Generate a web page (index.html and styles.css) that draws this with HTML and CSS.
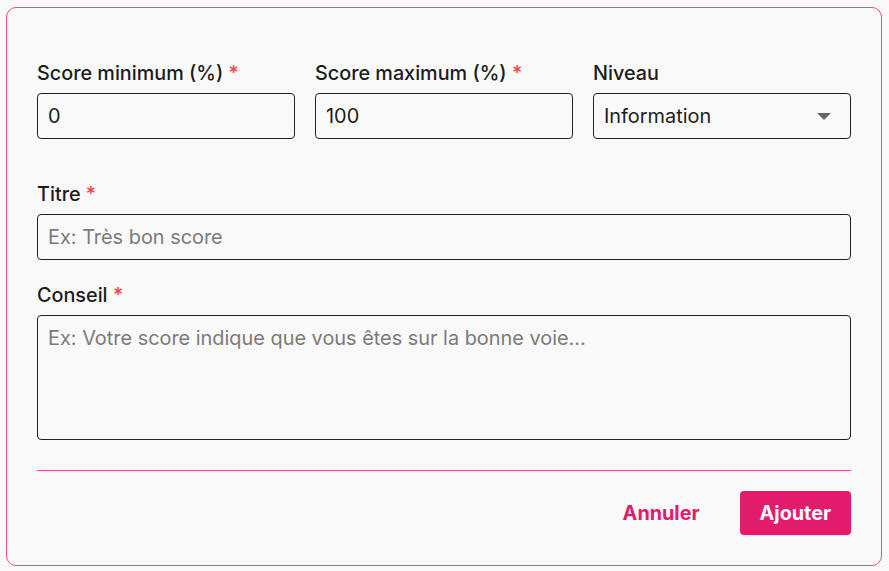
FILE: index.html
```html
<!DOCTYPE html>
<html lang="fr">
<head>
<meta charset="utf-8">
<link rel="stylesheet" href="styles.css">
</head>
<body>
<form class="card">
  <div class="grid3">
    <div class="field">
      <label class="label">Score minimum (%) <span class="req">*</span></label>
      <div class="input">0</div>
    </div>
    <div class="field">
      <label class="label">Score maximum (%) <span class="req">*</span></label>
      <div class="input">100</div>
    </div>
    <div class="field">
      <label class="label">Niveau</label>
      <div class="input select">
        <span>Information</span>
        <svg class="caret" width="14" height="7" viewBox="0 0 14 7"><path d="M0 0H14L7 7Z" fill="#666"/></svg>
      </div>
    </div>
  </div>
  <div class="field f-titre">
    <label class="label">Titre <span class="req">*</span></label>
    <div class="input ph">Ex: Très bon score</div>
  </div>
  <div class="field f-conseil">
    <label class="label">Conseil <span class="req">*</span></label>
    <div class="input textarea ph">Ex: Votre score indique que vous êtes sur la bonne voie...</div>
  </div>
  <div class="actions">
    <button type="button" class="btn btn-text">Annuler</button>
    <button type="button" class="btn btn-primary">Ajouter</button>
  </div>
</form>
</body>
</html>
```
FILE: styles.css
```css
* { box-sizing: border-box; }
html, body { margin: 0; background: #f9f9f9; }
body {
  padding: 7px 7px 5px 6px;
  font-family: Inter, "Noto Sans", sans-serif;
  color: #1c1c1c;
}
.card {
  width: 876px;
  height: 559px;
  border: 1px solid #f0498c;
  border-radius: 10px;
  background: #f9f9f9;
  padding: 53px 30px 30px 30px;
  display: flex;
  flex-direction: column;
}
.grid3 {
  display: grid;
  grid-template-columns: repeat(3, 1fr);
  column-gap: 20px;
}
.field { display: flex; flex-direction: column; }
.label {
  font-size: 19.8px;
  line-height: 24px;
  font-weight: 500;
  margin-bottom: 8px;
  color: #1c1c1c;
}
.req { color: #f44545; }
.input {
  height: 46px;
  border: 1px solid #222;
  border-radius: 4px;
  padding: 0 10px;
  font-size: 19.9px;
  display: flex;
  align-items: center;
  color: #1c1c1c;
  background: #f9f9f9;
}
.select { justify-content: space-between; padding-right: 19px; }
.caret { display: block; }
.ph { color: #7b7b7b; }
.f-titre { margin-top: 43px; }
.f-conseil { margin-top: 23px; }
.textarea {
  height: 125px;
  align-items: flex-start;
  padding-top: 10px;
}
.actions {
  margin-top: 30px;
  border-top: 1px solid #f0498c;
  padding-top: 20px;
  display: flex;
  justify-content: flex-end;
  gap: 20px;
}
.btn {
  font-family: inherit;
  font-size: 19.8px;
  font-weight: 700;
  height: 44px;
  border: 0;
  border-radius: 4px;
  padding: 0 20px;
  cursor: pointer;
}
.btn-text { background: transparent; color: #e31b6d; }
.btn-primary { background: #e31b6d; color: #fff; }
```
